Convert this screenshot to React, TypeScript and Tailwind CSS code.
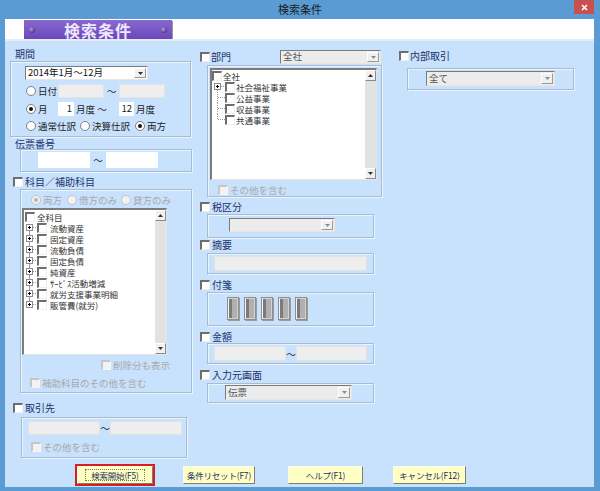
import React from "react";

type P = { className?: string; children?: React.ReactNode };

const LBL = "text-[10px] leading-[12px] text-[#22336a] whitespace-nowrap";
const DIS = "text-[9.5px] leading-[10px] text-[#a9a9a9] whitespace-nowrap";
const TXT = "text-[9.5px] leading-[10px] text-[#222] whitespace-nowrap";
const ITEM = "text-[8.5px] leading-[10px] text-[#333] whitespace-nowrap";

function Check({ disabled }: { disabled?: boolean }) {
  return (
    <div
      className={
        disabled
          ? "w-[10px] h-[10px] shrink-0 bg-[#f2f2f2] border-t-2 border-l-2 border-r border-b border-t-[#c6c6c6] border-l-[#c6c6c6] border-r-[#f6f6f6] border-b-[#f6f6f6]"
          : "w-[10px] h-[10px] shrink-0 bg-white border-t-2 border-l-2 border-r border-b border-t-[#6e6e6e] border-l-[#6e6e6e] border-r-[#efefef] border-b-[#efefef]"
      }
    />
  );
}

function Radio({ checked, disabled }: { checked?: boolean; disabled?: boolean }) {
  return (
    <div
      className={
        disabled
          ? "w-[10px] h-[10px] shrink-0 rounded-full bg-[#f2f2f2] border border-[#c4c4c4] flex items-center justify-center"
          : "w-[10px] h-[10px] shrink-0 rounded-full bg-white border border-[#7f7f7f] flex items-center justify-center"
      }
    >
      {checked && (
        <div
          className={
            disabled
              ? "w-[4px] h-[4px] rounded-full bg-[#b4b4b4]"
              : "w-[4px] h-[4px] rounded-full bg-[#111]"
          }
        />
      )}
    </div>
  );
}

function Arrow({ up, light }: { up?: boolean; light?: boolean }) {
  return (
    <svg width="5" height="3" className="shrink-0">
      <path d={up ? "M0 3h5L2.5 0z" : "M0 0h5L2.5 3z"} fill={light ? "#8c8c8c" : "#333"} />
    </svg>
  );
}

function Combo({ text, className = "", gray }: { text?: string; className?: string; gray?: boolean }) {
  return (
    <div
      className={`flex items-stretch border border-t-[#7a7a7a] border-l-[#7a7a7a] border-b-[#e6e6e6] border-r-[#e6e6e6] ${
        gray ? "bg-[#ececec]" : "bg-white"
      } ${className}`}
    >
      <div className={`flex-1 pl-[2px] flex items-center text-[9.5px] leading-none ${gray ? "text-[#555]" : "text-[#111]"}`}>
        {text}
      </div>
      <div className="w-[12px] my-[1px] mr-[1px] bg-[#f0f0f0] border border-t-white border-l-white border-r-[#9a9a9a] border-b-[#9a9a9a] flex items-center justify-center">
        <Arrow light={gray} />
      </div>
    </div>
  );
}

function Field({ className = "", disabled, children }: P & { disabled?: boolean }) {
  return (
    <div
      className={`${
        disabled ? "bg-[#eeeeee] border border-[#e3e3e3]" : "bg-white"
      } flex items-center justify-end pr-[2px] text-[9.5px] leading-none text-[#222] shrink-0 ${className}`}
    >
      {children}
    </div>
  );
}

function Group({ className = "", children }: P) {
  return (
    <div className={`border border-[#a9bccf] shadow-[inset_1px_1px_0_#eaf4ff,1px_1px_0_#eaf4ff] ${className}`}>
      {children}
    </div>
  );
}

function ScrollBar() {
  return (
    <div className="w-[11px] shrink-0 bg-[#e2e2e2] flex flex-col justify-between">
      <div className="h-[11px] bg-[#f0f0f0] border border-t-white border-l-white border-r-[#8a8a8a] border-b-[#8a8a8a] flex items-center justify-center">
        <Arrow up />
      </div>
      <div className="h-[11px] bg-[#f0f0f0] border border-t-white border-l-white border-r-[#8a8a8a] border-b-[#8a8a8a] flex items-center justify-center">
        <Arrow />
      </div>
    </div>
  );
}

function PlusConn({ top, bottom }: { top?: boolean; bottom?: boolean }) {
  return (
    <svg width="11" height="11" className="shrink-0">
      {top && <line x1="3.5" y1="0" x2="3.5" y2="2" stroke="#9a9a9a" />}
      {bottom && <line x1="3.5" y1="9" x2="3.5" y2="11" stroke="#9a9a9a" />}
      <rect x="0.5" y="2.5" width="6" height="6" fill="#fff" stroke="#8c8c8c" />
      <path d="M2 5.5H5M3.5 4V7" stroke="#000" />
      <line x1="7" y1="5.5" x2="11" y2="5.5" stroke="#9a9a9a" strokeDasharray="1 1" />
    </svg>
  );
}

function DeptConn({ kind }: { kind: "plus" | "mid" | "last" }) {
  return (
    <svg width="13" height="11" className="shrink-0">
      {kind === "plus" && (
        <>
          <line x1="5.5" y1="9" x2="5.5" y2="11" stroke="#9a9a9a" strokeDasharray="1 1" />
          <rect x="2.5" y="2.5" width="6" height="6" fill="#fff" stroke="#8c8c8c" />
          <path d="M4 5.5H7M5.5 4V7" stroke="#000" />
          <line x1="9" y1="5.5" x2="13" y2="5.5" stroke="#9a9a9a" strokeDasharray="1 1" />
        </>
      )}
      {kind !== "plus" && (
        <>
          <line x1="5.5" y1="0" x2="5.5" y2={kind === "last" ? 6 : 11} stroke="#9a9a9a" strokeDasharray="1 1" />
          <line x1="6" y1="5.5" x2="13" y2="5.5" stroke="#9a9a9a" strokeDasharray="1 1" />
        </>
      )}
    </svg>
  );
}

function Fusen() {
  return (
    <svg width="13" height="24" viewBox="0 0 13 24" className="shrink-0">
      <rect x="0.5" y="0.5" width="11" height="22" fill="#d2d2d2" stroke="#8e8e8e" />
      <line x1="1.5" y1="1.5" x2="1.5" y2="22" stroke="#f4f4f4" />
      <rect x="2" y="2" width="3" height="19" fill="#7b7b7b" />
      <rect x="5" y="2" width="5" height="19" fill="#b0b0b0" />
      <line x1="12.5" y1="1" x2="12.5" y2="24" stroke="#9c9c9c" />
      <line x1="1" y1="23.5" x2="13" y2="23.5" stroke="#9c9c9c" />
    </svg>
  );
}

function Btn({ children, className = "" }: P) {
  return (
    <div
      className={`h-[18px] bg-[#ffffc4] border border-t-[#fbfbf0] border-l-[#fbfbf0] border-r-[#7d7d7d] border-b-[#7d7d7d] flex items-center justify-center text-[8.5px] leading-none tracking-[-0.2px] text-[#1f2f5f] whitespace-nowrap ${className}`}
    >
      {children}
    </div>
  );
}

const accounts = [
  "流動資産",
  "固定資産",
  "流動負債",
  "固定負債",
  "純資産",
  "ｻｰﾋﾞｽ活動増減",
  "就労支援事業明細",
  "販管費(就労)",
];

const depts = ["社会福祉事業", "公益事業", "収益事業", "共通事業"];

export default function App() {
  return (
    <div className="w-[600px] h-[491px] bg-[#5a9bd3] flex flex-col overflow-hidden font-['Noto_Sans_CJK_JP','Noto_Sans',sans-serif]">
      {/* title bar */}
      <div className="h-[19px] shrink-0 grid grid-cols-[1fr_auto_1fr]">
        <div />
        <div className="h-[19px] flex items-center text-[11px] text-[#1b1b1b]">検索条件</div>
        <div className="flex justify-end pr-[6px]">
          <div className="w-[20px] h-[14px] bg-[#c8504e] flex items-center justify-center">
            <svg width="7" height="7">
              <path d="M1 1L6 6M6 1L1 6" stroke="#fff" strokeWidth="1.6" />
            </svg>
          </div>
        </div>
      </div>

      {/* body */}
      <div className="ml-[5px] mr-[6px] flex-1 flex flex-col">
        <div className="h-[20px] shrink-0 bg-white flex items-start">
          <div className="ml-[19px] mt-[1px] w-[148px] h-[19px] bg-gradient-to-b from-[#8a68d1] to-[#6b47ba] shadow-[1px_1px_0_#9a9a9a] flex items-center justify-between px-[5px]">
            <div className="w-[6px] h-[6px] rounded-full bg-[radial-gradient(circle_at_35%_35%,#b49be6,#2a1160)]" />
            <div className="text-[16px] leading-none font-bold tracking-[1px] text-[#eee7ff]">検索条件</div>
            <div className="w-[6px] h-[6px] rounded-full bg-[radial-gradient(circle_at_35%_35%,#b49be6,#2a1160)]" />
          </div>
        </div>
        <div className="h-[2px] shrink-0 bg-[#e2edf8]" />

        <div className="flex-1 bg-[#c8e1fc] flex flex-col">
          {/* columns */}
          <div className="h-[423px] shrink-0 flex items-start">
            {/* LEFT */}
            <div className="ml-[5px] w-[182px] flex flex-col">
              <div className={`mt-[7px] h-[12px] pl-[5px] ${LBL}`}>期間</div>
              <Group className="mt-[1px] h-[76px] w-[181px] flex flex-col">
                <Combo className="ml-[14px] mt-[4px] w-[123px] h-[14px]" text="2014年1月～12月" />
                <div className="ml-[15px] mt-[4px] h-[14px] flex items-center">
                  <Radio />
                  <span className={`ml-[2px] w-[20px] ${TXT}`}>日付</span>
                  <Field className="w-[46px] h-[14px]" disabled />
                  <span className={`w-[15px] text-center ${TXT}`}>～</span>
                  <Field className="w-[46px] h-[14px]" disabled />
                </div>
                <div className="ml-[15px] mt-[4px] h-[14px] flex items-center">
                  <Radio checked />
                  <span className={`ml-[2px] w-[20px] ${TXT}`}>月</span>
                  <Field className="w-[16px] h-[14px]">1</Field>
                  <span className={`ml-[2px] w-[43px] ${TXT}`}>月度 ～</span>
                  <Field className="w-[15px] h-[14px]">12</Field>
                  <span className={`ml-[2px] ${TXT}`}>月度</span>
                </div>
                <div className="ml-[15px] mt-[5px] h-[10px] flex items-center">
                  <Radio />
                  <span className={`ml-[2px] w-[42px] ${TXT}`}>通常仕訳</span>
                  <Radio />
                  <span className={`ml-[2px] w-[43px] ${TXT}`}>決算仕訳</span>
                  <Radio checked />
                  <span className={`ml-[2px] ${TXT}`}>両方</span>
                </div>
              </Group>

              <div className={`mt-[1px] h-[11px] leading-[11px] pl-[5px] ${LBL}`}>伝票番号</div>
              <Group className="ml-[10px] h-[23px] w-[172px] flex items-start">
                <div className="ml-[17px] mt-[2px] flex items-center">
                  <Field className="w-[52px] h-[16px]" />
                  <span className={`w-[16px] text-center ${TXT}`}>～</span>
                  <Field className="w-[52px] h-[16px]" />
                </div>
              </Group>

              <div className="mt-[4px] h-[12px] flex items-center">
                <div className="ml-[3px]">
                  <Check />
                </div>
                <span className={`ml-[2px] ${LBL}`}>科目／補助科目</span>
              </div>
              <Group className="mt-[1px] ml-[10px] h-[204px] w-[172px] flex flex-col">
                <div className="ml-[10px] mt-[5px] h-[10px] flex items-center">
                  <Radio checked disabled />
                  <span className={`ml-[2px] w-[24px] ${DIS}`}>両方</span>
                  <Radio disabled />
                  <span className={`ml-[2px] w-[42px] ${DIS}`}>借方のみ</span>
                  <Radio disabled />
                  <span className={`ml-[2px] ${DIS}`}>貸方のみ</span>
                </div>
                <div className="mt-[3px] ml-[1px] w-[145px] h-[147px] flex bg-white border-t-2 border-l-2 border-r border-b border-t-[#7c7c7c] border-l-[#7c7c7c] border-r-[#e6e6e6] border-b-[#e6e6e6]">
                  <div className="flex-1 pt-[1px] flex flex-col">
                    <div className="h-[11px] pl-[1px] flex items-center">
                      <Check />
                      <span className={`ml-[2px] ${ITEM}`}>全科目</span>
                    </div>
                    {accounts.map((a, i) => (
                      <div key={a} className="h-[11px] pl-[2px] flex items-center">
                        <PlusConn top={i > 0} bottom={i < accounts.length - 1} />
                        <Check />
                        <span className={`ml-[3px] ${ITEM}`}>{a}</span>
                      </div>
                    ))}
                  </div>
                  <ScrollBar />
                </div>
                <div className="mt-[5px] h-[10px] flex items-center ml-[80px]">
                  <Check disabled />
                  <span className={`ml-[2px] ${DIS}`}>削除分も表示</span>
                </div>
                <div className="mt-[8px] h-[10px] flex items-center ml-[9px]">
                  <Check disabled />
                  <span className={`ml-[2px] ${DIS}`}>補助科目のその他を含む</span>
                </div>
              </Group>

              <div className="mt-[9px] h-[12px] flex items-center">
                <div className="ml-[3px]">
                  <Check />
                </div>
                <span className={`ml-[2px] ${LBL}`}>取引先</span>
              </div>
              <Group className="mt-[3px] ml-[11px] h-[41px] w-[166px] flex flex-col">
                <div className="ml-[6px] mt-[3px] flex items-center">
                  <Field className="w-[72px] h-[14px]" disabled />
                  <span className={`w-[10px] text-center ${TXT}`}>～</span>
                  <Field className="w-[72px] h-[14px]" disabled />
                </div>
                <div className="mt-[7px] ml-[9px] h-[10px] flex items-center">
                  <Check disabled />
                  <span className={`ml-[2px] ${DIS}`}>その他を含む</span>
                </div>
              </Group>
            </div>

            {/* MIDDLE */}
            <div className="ml-[7px] w-[183px] flex flex-col">
              <div className="mt-[9px] h-[14px] flex items-center">
                <div className="ml-[1px]">
                  <Check />
                </div>
                <span className={`ml-[1px] w-[69px] ${LBL}`}>部門</span>
                <Combo className="w-[101px] h-[14px]" text="全社" gray />
              </div>
              <Group className="mt-[1px] ml-[8px] h-[132px] w-[175px] flex flex-col">
                <div className="mt-[2px] ml-[2px] w-[167px] h-[112px] flex bg-white border-t-2 border-l-2 border-r border-b border-t-[#7c7c7c] border-l-[#7c7c7c] border-r-[#e6e6e6] border-b-[#e6e6e6]">
                  <div className="flex-1 flex flex-col">
                    <div className="h-[11px] flex items-center">
                      <Check />
                      <span className={`ml-[1px] ${ITEM}`}>全社</span>
                    </div>
                    {depts.map((d, i) => (
                      <div key={d} className="h-[11px] flex items-center">
                        <DeptConn kind={i === 0 ? "plus" : i === depts.length - 1 ? "last" : "mid"} />
                        <Check />
                        <span className={`ml-[1px] ${ITEM}`}>{d}</span>
                      </div>
                    ))}
                  </div>
                  <ScrollBar />
                </div>
                <div className="mt-[5px] ml-[10px] h-[10px] flex items-center">
                  <Check disabled />
                  <span className={`ml-[2px] ${DIS}`}>その他を含む</span>
                </div>
              </Group>

              <div className="mt-[4px] h-[12px] flex items-center">
                <div className="ml-[1px]">
                  <Check />
                </div>
                <span className={`ml-[2px] ${LBL}`}>税区分</span>
              </div>
              <Group className="mt-[1px] ml-[8px] h-[24px] w-[167px] flex items-start">
                <Combo className="ml-[21px] mt-[3px] w-[106px] h-[14px]" gray />
              </Group>

              <div className="mt-[1px] h-[12px] flex items-center">
                <div className="ml-[1px]">
                  <Check />
                </div>
                <span className={`ml-[2px] ${LBL}`}>摘要</span>
              </div>
              <Group className="mt-[2px] ml-[8px] h-[21px] w-[167px] flex items-start">
                <Field className="ml-[6px] mt-[2px] w-[153px] h-[15px]" disabled />
              </Group>

              <div className="mt-[5px] h-[12px] flex items-center">
                <div className="ml-[1px]">
                  <Check />
                </div>
                <span className={`ml-[2px] ${LBL}`}>付箋</span>
              </div>
              <Group className="mt-[1px] ml-[8px] h-[34px] w-[167px] flex items-start">
                <div className="ml-[19px] mt-[4px] flex gap-[4px]">
                  <Fusen />
                  <Fusen />
                  <Fusen />
                  <Fusen />
                  <Fusen />
                </div>
              </Group>

              <div className="mt-[5px] h-[12px] flex items-center">
                <div className="ml-[1px]">
                  <Check />
                </div>
                <span className={`ml-[2px] ${LBL}`}>金額</span>
              </div>
              <Group className="ml-[8px] h-[21px] w-[167px] flex items-start">
                <div className="ml-[6px] mt-[2px] flex items-center">
                  <Field className="w-[72px] h-[15px]" disabled />
                  <span className={`w-[10px] text-center ${TXT}`}>～</span>
                  <Field className="w-[71px] h-[15px]" disabled />
                </div>
              </Group>

              <div className="mt-[5px] h-[12px] flex items-center">
                <div className="ml-[1px]">
                  <Check />
                </div>
                <span className={`ml-[2px] ${LBL}`}>入力元画面</span>
              </div>
              <Group className="mt-[2px] ml-[8px] h-[20px] w-[167px] flex items-start">
                <Combo className="ml-[17px] mt-[1px] w-[127px] h-[15px]" text="伝票" gray />
              </Group>
            </div>

            {/* RIGHT */}
            <div className="ml-[16px] w-[177px] flex flex-col">
              <div className="mt-[9px] h-[12px] flex items-center">
                <div className="ml-[1px]">
                  <Check />
                </div>
                <span className={`ml-[1px] ${LBL}`}>内部取引</span>
              </div>
              <Group className="mt-[6px] ml-[9px] h-[22px] w-[167px] flex items-start">
                <Combo className="ml-[18px] mt-[2px] w-[129px] h-[15px]" text="全て" gray />
              </Group>
            </div>
          </div>

          {/* buttons */}
          <div className="flex-1 flex items-start">
            <div className="ml-[70px] w-[80px] h-[22px] border-2 border-[#d71f1f] flex">
              <Btn className="flex-1 h-[18px]">
                <div className="px-[5px] h-[12px] border border-dotted border-[#7a7a50] flex items-center">検索開始(F5)</div>
              </Btn>
            </div>
            <Btn className="ml-[28px] mt-[2px] w-[72px]">条件リセット(F7)</Btn>
            <Btn className="ml-[33px] mt-[2px] w-[75px]">ヘルプ(F1)</Btn>
            <Btn className="ml-[30px] mt-[2px] w-[73px]">キャンセル(F12)</Btn>
          </div>
        </div>
      </div>
      <div className="h-[4px] shrink-0" />
    </div>
  );
}
